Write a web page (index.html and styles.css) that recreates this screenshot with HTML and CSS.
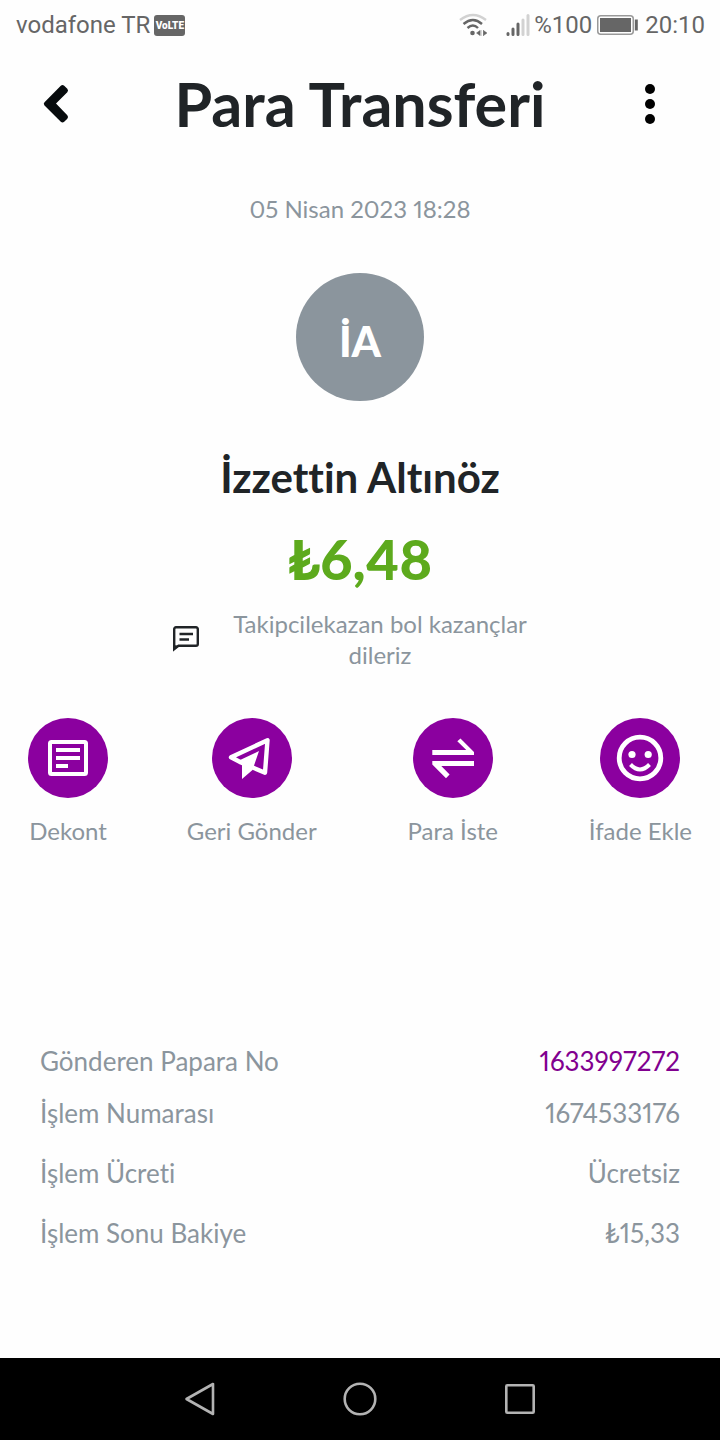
FILE: index.html
```html
<!DOCTYPE html>
<html lang="tr">
<head>
<meta charset="utf-8">
<meta name="viewport" content="width=device-width, initial-scale=1">
<title>Para Transferi</title>
<link rel="stylesheet" href="styles.css">
</head>
<body>
<div class="status-bar">
  <div class="status-group">
    <span>vodafone TR</span>
    <span class="volte">VoLTE</span>
  </div>
  <div class="status-group">
    <svg class="wifi" width="30" height="24" viewBox="0 0 30 24" fill="none" aria-hidden="true">
      <path d="M1 7Q14 -3 27 7" stroke="#d2d2d2" stroke-width="2.4"/>
      <path d="M4.500 11Q14 3 23 11M8.500 15Q14 10 19 15" stroke="#666" stroke-width="2.4"/>
      <circle cx="13.500" cy="20" r="2.300" fill="#666"/>
      <path d="M17.500 20l3.500-2.500v5zM22 17v6M24.500 17v6M24.500 17.500l3.500 2.500-3.500 2.500z" fill="#666" stroke="#666" stroke-width="0.500"/>
    </svg>
    <svg class="signal" width="24" height="24" viewBox="0 0 24 24" fill="none" stroke-width="3" stroke-linecap="round" aria-hidden="true">
      <path d="M2 20.500v1M7 16v5.500M12 11v10.500" stroke="#666"/>
      <path d="M17 7v14.500M22 2.500v19" stroke="#d2d2d2"/>
    </svg>
    <span class="percent">%100</span>
    <svg class="battery" width="41" height="20" viewBox="0 0 41 20" fill="none" aria-hidden="true">
      <rect x="0.750" y="0.750" width="35.500" height="18.500" rx="3" stroke="#999" stroke-width="1.500"/>
      <rect x="3" y="3" width="31" height="14" fill="#666"/>
      <path d="M39.300 4.500v11" stroke="#666" stroke-width="3"/>
    </svg>
    <span>20:10</span>
  </div>
</div>

<header class="header">
  <button class="icon-button" type="button" aria-label="Geri">
    <svg width="32" height="40" viewBox="0 0 32 40" fill="none" aria-hidden="true"><path d="M4.500 18.200L20.800 1.700Q22.500 0.200 24.200 1.700L27.300 4.800Q28.800 6.500 27.300 8.200L16 19.500 27.300 31.300Q28.800 33 27.300 34.700L24.200 37.800Q22.500 39.300 20.800 37.800L4.500 21.500Q3 19.800 4.500 18.200z" fill="#070b0d"/></svg>
  </button>
  <h1 class="title">Para Transferi</h1>
  <button class="icon-button" type="button" aria-label="Menü">
    <svg width="12" height="40" viewBox="0 0 12 40" aria-hidden="true"><circle cx="6" cy="5" r="5"/><circle cx="6" cy="20" r="5"/><circle cx="6" cy="35" r="5"/></svg>
  </button>
</header>

<main class="content">
  <section class="summary">
    <time class="date" datetime="2023-04-05T18:28">05 Nisan 2023 18:28</time>
    <div class="avatar">İA</div>
    <h2 class="name">İzzettin Altınöz</h2>
    <p class="amount">₺6,48</p>
    <div class="note">
      <svg width="28" height="28" viewBox="0 0 28 28" fill="none" stroke="#202427" stroke-width="2.400" aria-hidden="true">
        <path d="M2.200 24V4a1.800 1.800 0 0 1 1.800-1.800h20a1.800 1.800 0 0 1 1.800 1.800v15a1.800 1.800 0 0 1-1.800 1.800H6.500z" stroke-linejoin="miter"/>
        <path d="M1 20v6.500l6-5.700z" fill="#202427" stroke="none"/>
        <path d="M7.500 9h13.500M7.500 14.500h9.500"/>
      </svg>
      <p class="note-text">Takipcilekazan bol kazançlar dileriz</p>
    </div>
  </section>

  <nav class="actions" aria-label="İşlemler">
    <button class="action" type="button">
      <span class="action-icon"><svg width="80" height="80" viewBox="0 0 80 80" fill="none" stroke="#fff" stroke-width="4" aria-hidden="true"><rect x="22" y="24" width="36" height="32" rx="1.500"/><path d="M28 32h24M28 40h24M28 48h12"/></svg></span>
      <span>Dekont</span>
    </button>
    <button class="action" type="button">
      <span class="action-icon"><svg width="80" height="80" viewBox="0 0 80 80" fill="#fff" aria-hidden="true">
        <path d="M19 39.200L55.500 22.200 53 54.700 29 44.500z" fill="none" stroke="#fff" stroke-width="4.400" stroke-linejoin="round"/>
        <path d="M27 42.500L47 33 40.500 52 30 61V46z"/></svg></span>
      <span>Geri Gönder</span>
    </button>
    <button class="action action-wide" type="button">
      <span class="action-icon"><svg width="80" height="80" viewBox="0 0 80 80" fill="#fff" aria-hidden="true"><path d="M19.300 32H53.300L44.300 23.300 47.500 20.500 61 34V37H19.300zM19.300 43H61V48H28.300L36.600 56.600 33 60.300 19.300 46.500z"/></svg></span>
      <span>Para İste</span>
    </button>
    <button class="action" type="button">
      <span class="action-icon"><svg width="80" height="80" viewBox="0 0 80 80" fill="none" stroke="#fff" stroke-width="4.800" aria-hidden="true"><circle cx="40" cy="40" r="20.800"/><circle cx="32" cy="36.500" r="3.600" fill="#fff" stroke="none"/><circle cx="48.200" cy="36.500" r="3.600" fill="#fff" stroke="none"/><path d="M30.500 46.500Q40 56.500 49.500 46.500" stroke-width="4"/></svg></span>
      <span>İfade Ekle</span>
    </button>
  </nav>

  <dl class="details">
    <div class="row row-first"><dt>Gönderen Papara No</dt><dd><a class="account-link" href="#">1633997272</a></dd></div>
    <div class="row"><dt>İşlem Numarası</dt><dd>1674533176</dd></div>
    <div class="row"><dt>İşlem Ücreti</dt><dd>Ücretsiz</dd></div>
    <div class="row"><dt>İşlem Sonu Bakiye</dt><dd>₺15,33</dd></div>
  </dl>
</main>

<nav class="system-nav" aria-label="Sistem">
  <button class="system-button" type="button" aria-label="Geri"><svg width="36" height="36" viewBox="0 0 36 36" aria-hidden="true"><path d="M31 3v30L4.500 18z"/></svg></button>
  <button class="system-button" type="button" aria-label="Ana ekran"><svg width="36" height="36" viewBox="0 0 36 36" aria-hidden="true"><circle cx="18" cy="18" r="15.300"/></svg></button>
  <button class="system-button" type="button" aria-label="Son uygulamalar"><svg width="36" height="36" viewBox="0 0 36 36" aria-hidden="true"><rect x="4.300" y="4.300" width="27.400" height="27.400" rx="1"/></svg></button>
</nav>
</body>
</html>
```
FILE: styles.css
```css
* { box-sizing: border-box; }

body {
  display: flex;
  flex-direction: column;
  min-height: 100vh;
  margin: 0;
  background: #fefefe;
  color: #8b959d;
  font-family: Lato, "Noto Sans", sans-serif;
  font-variant-ligatures: none;
  font-variant-numeric: proportional-nums;
}

h1, h2, p, dl, dd { margin: 0; }

svg { display: block; flex: none; }

button {
  padding: 0;
  border: 0;
  background: none;
  color: inherit;
  font: inherit;
}

/* Status bar */
.status-bar {
  display: flex;
  justify-content: space-between;
  align-items: center;
  height: 50px;
  padding: 0 15px 0 16px;
  color: #666;
  font-family: Roboto, sans-serif;
  font-size: 24px;
  font-variant-numeric: normal;
  line-height: 28px;
}

.status-group { display: flex; align-items: center; gap: 4px; }

.volte {
  width: 31px;
  border-radius: 3px;
  background: #666;
  color: #fff;
  font-size: 10px;
  font-weight: 900;
  line-height: 21px;
  text-align: center;
}

.signal { margin-left: 13px; }
.battery { margin: 0 3px 0 1px; }

/* Header */
.header {
  display: flex;
  justify-content: space-between;
  align-items: center;
  height: 108px;
  padding: 0 30px;
}

.icon-button {
  display: flex;
  justify-content: center;
  align-items: center;
  width: 80px;
  height: 64px;
}

.header .icon-button:first-child { width: 52px; margin-right: 28px; }

.title {
  color: #202427;
  font-size: 61px;
  font-weight: 700;
  line-height: 72px;
}

/* Summary */
.content { flex: 1; }

.summary {
  display: flex;
  flex-direction: column;
  align-items: center;
  padding-top: 35px;
  text-align: center;
}

.date { font-size: 24px; line-height: 32px; }

.avatar {
  width: 128px;
  height: 128px;
  margin-top: 48px;
  border-radius: 50%;
  background: #8b959d;
  color: #fff;
  font-size: 42px;
  font-weight: 900;
  line-height: 136px;
}

.name {
  margin-top: 50px;
  color: #202427;
  font-size: 42px;
  font-weight: 700;
  line-height: 52px;
}

.amount {
  margin-top: 22px;
  color: #5daa1d;
  font-size: 56px;
  font-weight: 900;
  line-height: 68px;
}

.note {
  display: flex;
  align-items: center;
  gap: 20px;
  margin-top: 15px;
  padding-right: 8px;
}

.note-text {
  width: 320px;
  font-size: 24px;
  line-height: 31px;
}

/* Actions */
.actions {
  display: flex;
  justify-content: space-between;
  margin-top: 48px;
  padding: 0 28px;
}

.action {
  display: flex;
  flex-direction: column;
  align-items: center;
  gap: 16px;
  font-size: 24px;
  line-height: 33px;
}

.action-wide { padding: 0 12px; }

.action-icon {
  width: 80px;
  height: 80px;
  border-radius: 50%;
  background: #8b009f;
}

/* Details */
.details {
  padding: 192px 40px 40px;
  font-size: 26px;
  line-height: 60px;
}

.row {
  display: flex;
  justify-content: space-between;
  gap: 16px;
}

.row-first { line-height: 44px; }
.account-link { color: #81008f; text-decoration: none; }

/* System navigation */
.system-nav {
  display: flex;
  justify-content: center;
  align-items: center;
  gap: 124px;
  height: 82px;
  background: #000;
}

.system-button svg {
  fill: none;
  stroke: #b3b3b3;
  stroke-width: 2.6;
  stroke-linejoin: round;
}
```
